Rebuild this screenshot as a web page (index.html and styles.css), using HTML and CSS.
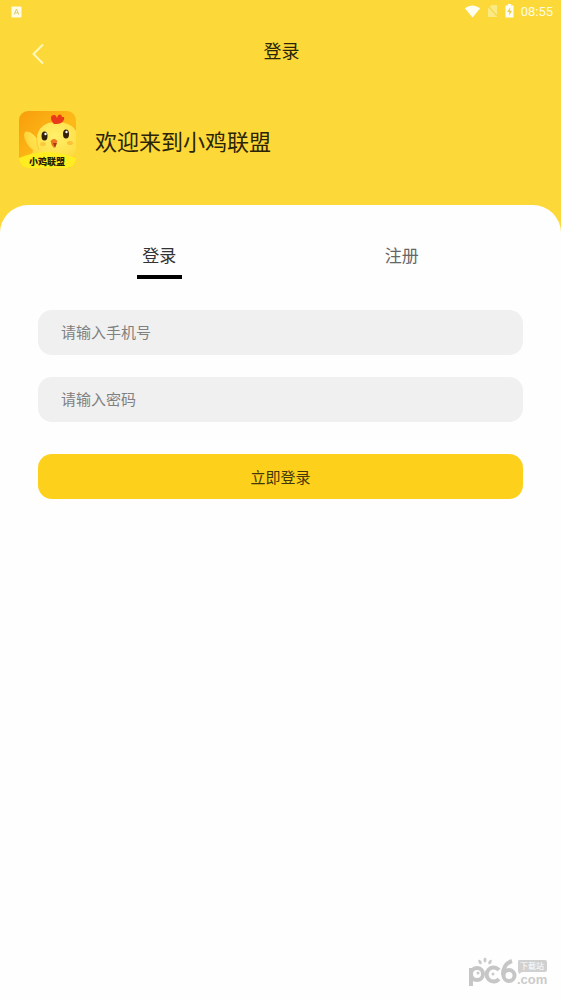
FILE: index.html
```html
<!DOCTYPE html>
<html lang="zh-CN">
<head>
<meta charset="utf-8">
<meta name="viewport" content="width=device-width, initial-scale=1">
<title>登录</title>
<link rel="stylesheet" href="styles.css">
</head>
<body>
<div class="status">
  <svg class="status-app" width="11" height="12" viewBox="0 0 11 12" aria-hidden="true"><rect width="10" height="11" x=".5" y=".5" rx="1" fill="#fffce6"/><path d="M3.2 8.5 5.5 3l2.3 5.5M4 6.9h3" fill="none" stroke="#dccd70" stroke-width="1"/></svg>
  <div class="status-right">
    <svg width="17" height="13" viewBox="0 0 17 13" aria-hidden="true"><path d="M.8 3.2Q8.500-2.400 16.200 3.200L8.500 12.500Z" fill="#fffef2"/></svg>
    <svg width="10" height="12" viewBox="0 0 10 12" aria-hidden="true"><path d="M3.500 0H9v12H0V3.500Z" fill="#fbe983"/><path d="m1 2 8 9" stroke="#f5d84c" stroke-width="1.200"/></svg>
    <svg width="9" height="14" viewBox="0 0 9 14" aria-hidden="true"><path d="M2.800 0h3.400v1.500H8.500V13.500H.5V1.500h2.300Z" fill="#fffef2"/><path d="M5.300 3.300 2 8h2.200v3.500L7.200 6.800H5Z" fill="#ecd04b"/></svg>
    <time>08:55</time>
  </div>
</div>
<header class="bar">
  <button class="back" type="button" aria-label="返回"><svg width="14" height="22" viewBox="0 0 14 22" aria-hidden="true"><path d="M13 1.500 3.500 11 13 20.500" fill="none" stroke="#fff8bd" stroke-width="2"/></svg></button>
  <h1>登录</h1>
</header>
<section class="welcome">
  <svg class="logo" width="57" height="57" viewBox="0 0 57 57" role="img" aria-label="小鸡联盟">
    <defs>
      <linearGradient id="bg" x1="0" y1="0" x2="1" y2="1"><stop offset="0" stop-color="#f89d0c"/><stop offset=".55" stop-color="#fdb918"/><stop offset="1" stop-color="#fda91f"/></linearGradient>
      <radialGradient id="body" cx=".6" cy=".3" r=".75"><stop offset="0" stop-color="#fff06b"/><stop offset=".6" stop-color="#ffe04a"/><stop offset="1" stop-color="#fdc62a"/></radialGradient>
      <clipPath id="tile"><rect width="57" height="57" rx="9"/></clipPath>
    </defs>
    <g clip-path="url(#tile)">
      <rect width="57" height="57" fill="url(#bg)"/>
      <path d="M18 28C15 23 9 19 6 21C3 25 8 35 14 39L9 57H57V20C54 14 46 11 37 11C26 11 18 17 18 28Z" fill="url(#body)"/>
      <path d="M18 28Q17 34 20 39" fill="none" stroke="#fcc934" stroke-width="1"/>
      <path d="M35 13C31 9 31 4 35 4c2 0 2 1 3 3 1-5 5-4 5-1l2 0c1 4-3 7-7 7Z" fill="#e93b19"/>
      <ellipse cx="25.500" cy="25" rx="3" ry="4.500" fill="#342008"/><circle cx="26.500" cy="23" r="1.200" fill="#fff"/>
      <ellipse cx="47" cy="23" rx="3" ry="4.500" fill="#342008"/><circle cx="47.500" cy="21" r="1.200" fill="#fff"/>
      <path d="M31.500 30q3.500-4 7 0l-3.500 7Q32 34 31.500 30Z" fill="#ee7621"/><path d="m34 32 4 0-2 5Z" fill="#a83a16"/>
      <ellipse cx="24" cy="33" rx="3" ry="2" fill="#fdc93e"/><ellipse cx="51" cy="32" rx="3" ry="2" fill="#fdc13a"/>
      <path d="M0 47Q27 35 57 47V57H0Z" fill="#ffed22"/>
      <text class="logo-text" x="28" y="54" text-anchor="middle">小鸡联盟</text>
    </g>
  </svg>
  <p>欢迎来到小鸡联盟</p>
</section>
<main class="card">
  <nav class="tabs">
    <button class="tab tab-active" type="button" aria-current="page">登录</button>
    <button class="tab" type="button">注册</button>
  </nav>
  <form class="form">
    <input type="tel" placeholder="请输入手机号" aria-label="手机号">
    <input type="password" placeholder="请输入密码" aria-label="密码">
    <button class="submit" type="submit">立即登录</button>
  </form>
  <svg class="mark" width="84" height="32" viewBox="0 0 84 32" role="img" aria-label="pc6下载站 .com">
    <g fill="none" stroke="#c6c6c6" stroke-width="4">
      <path d="M6 29V11"/><circle cx="12" cy="17" r="6"/>
      <path d="M34 13a7 7 0 1 0 0 9"/>
      <path d="M47 4Q38 7 38 18"/><circle cx="44" cy="18.500" r="5.500"/>
    </g>
    <g fill="#cbcbcb"><ellipse cx="15" cy="5" rx="1.500" ry="2.500" transform="rotate(-30 15 5)"/><ellipse cx="20" cy="3" rx="1.500" ry="2.500"/><ellipse cx="25" cy="5" rx="1.500" ry="2.500" transform="rotate(30 25 5)"/><circle cx="13" cy="16" r="1.500"/><circle cx="28" cy="17" r="1.500"/></g>
    <path d="M54 3h26q2 0 2 2v8q0 2-2 2H57l-3 2-1-3V5q0-2 1-2Z" fill="#d0d0d0"/>
    <text class="mark-tag" x="67" y="12" text-anchor="middle">下载站</text>
    <text class="mark-com" x="52" y="27">.com</text>
  </svg>
</main>
</body>
</html>
```
FILE: styles.css
```css
* {
  box-sizing: border-box;
}

body {
  margin: 0;
  min-height: 100vh;
  display: flex;
  flex-direction: column;
  background: #fcd938;
  color: #2b2408;
  font-family: "Noto Sans CJK SC", sans-serif;
}

button,
input {
  font: inherit;
  border: 0;
  padding: 0;
}

button {
  background: none;
  color: inherit;
  cursor: pointer;
}

h1,
p {
  margin: 0;
  font-weight: 400;
}

.status {
  height: 24px;
  padding: 0 8px 0 11px;
  display: flex;
  align-items: center;
  justify-content: space-between;
}

.status-right {
  display: flex;
  align-items: center;
  gap: 7px;
}

.status-right svg {
  margin-bottom: 2px;
}

.status time {
  color: #fffce0;
  font: 13px/20px Roboto, sans-serif;
}

.bar {
  height: 56px;
  padding: 0 28px 0 30px;
  display: grid;
  grid-template-columns: 16px 1fr 16px;
  align-items: center;
}

.back {
  height: 22px;
  margin-top: 4px;
}

.back svg {
  display: block;
}

.bar h1 {
  padding-bottom: 4px;
  font-size: 18px;
  line-height: 26px;
  text-align: center;
}

.welcome {
  height: 125px;
  padding: 31px 19px 0;
  display: flex;
  align-items: flex-start;
  gap: 19px;
}

.welcome p {
  font-size: 22px;
  line-height: 58px;
}

.logo-text {
  font-size: 9px;
  font-weight: 900;
  fill: #241c04;
}

.card {
  flex: 1;
  display: flex;
  flex-direction: column;
  padding: 36px 38px 10px;
  background: #fefefe;
  border-radius: 28px 28px 0 0;
}

.tabs {
  display: grid;
  grid-template-columns: 1fr 1fr;
  justify-items: center;
}

.tab {
  width: 45px;
  height: 38px;
  padding-bottom: 6px;
  border-bottom: 4px solid transparent;
  color: #666;
  font-size: 17px;
  line-height: 28px;
}

.tab-active {
  border-color: #000;
  color: #333;
}

.form {
  margin-top: 31px;
  display: flex;
  flex-direction: column;
}

.form input,
.submit {
  width: 100%;
  height: 45px;
  border-radius: 14px;
  font-size: 15px;
}

.form input {
  margin-bottom: 22px;
  padding: 0 23px 2px;
  background: #f0f0f0;
  color: #333;
}

.form input::placeholder {
  color: #808080;
  opacity: 1;
}

.submit {
  margin-top: 10px;
  background: #fdd01b;
  color: #43370a;
}

.mark {
  margin: auto -26px 0 auto;
}

.mark-tag {
  font-size: 8px;
  fill: #fff;
}

.mark-com {
  font-family: "Liberation Sans", sans-serif;
  font-size: 13px;
  font-weight: 700;
  fill: #cbcbcb;
}
```
